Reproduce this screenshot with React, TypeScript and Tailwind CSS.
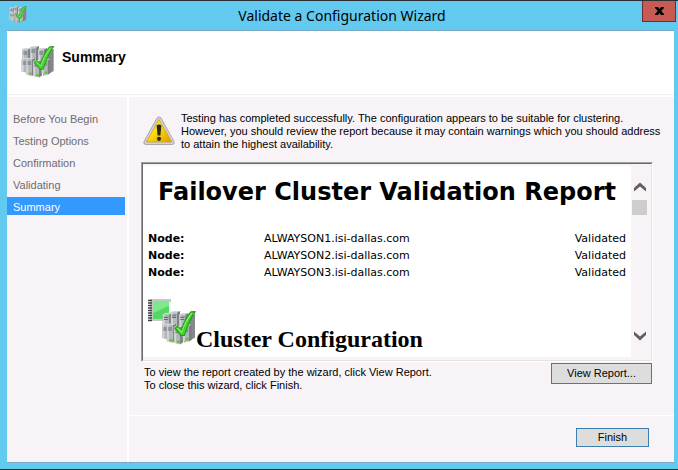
import React from "react";

const uiFont = "font-['Liberation_Sans',Arial,sans-serif]";
const reportFont = "font-['DejaVu_Sans',Verdana,sans-serif]";

const steps = ["Before You Begin", "Testing Options", "Confirmation", "Validating", "Summary"];

const nodes = [
  { name: "ALWAYSON1.isi-dallas.com", status: "Validated" },
  { name: "ALWAYSON2.isi-dallas.com", status: "Validated" },
  { name: "ALWAYSON3.isi-dallas.com", status: "Validated" },
];

function Tower({ x, y, h, light = false }: { x: number; y: number; h: number; light?: boolean }) {
  return (
    <g transform={`translate(${x} ${y})`}>
      <path d="M0 1 L3 0 L9 0 L6.5 1.5 L0 1.5Z" fill="#d4d6d9" />
      <path d={`M6 1.5 L9 0 L9 ${h - 2} L6 ${h}Z`} fill="#7d8186" />
      <path d={`M0 1.2 L6 1.5 L6 ${h} L0 ${h - 1.5}Z`} fill="#b3b6ba" />
      <path d={`M0.4 1.5 L2.2 1.5 L2.2 ${h - 1} L0.4 ${h - 1.5}Z`} fill="#d3d5d8" />
      <path d="M1.2 4h4M1.2 6h4" stroke="#6a6e73" strokeWidth="1" />
      {light && <ellipse cx="4.4" cy={h - 2.4} rx="1.7" ry="1.2" fill="#5fc926" />}
    </g>
  );
}

function Servers() {
  return (
    <g>
      <path d="M22 5 L32.5 3 L32.5 25 L22 30Z" fill="#a5a8ad" />
      <path d="M27 5 L32.5 3 L32.5 25 L27 28Z" fill="#85898e" />
      <Tower x={1} y={2} h={21} />
      <Tower x={9} y={0} h={22} />
      <Tower x={17} y={2} h={24} />
      <Tower x={0.5} y={12} h={15} />
      <Tower x={5} y={12} h={18} light />
      <Tower x={12} y={14} h={17.5} light />
      <Tower x={20.5} y={13} h={16} light />
      <path
        d="M13 16.5 L15.5 14.2 L19.3 17.8 C21.5 11 25 4.5 28.5 0.8 L32.8 0.6 C28.5 6 25 14.5 22.3 23.2 L18.5 23.2 C17 20.5 15 18.2 13 16.5Z"
        fill="#44d32c"
        stroke="#249a1b"
        strokeWidth="1"
        strokeLinejoin="round"
      />
      <path d="M15.4 15.8 L19.7 20 Q23.5 9 29.6 1.8" fill="none" stroke="#8bf06c" strokeWidth="1" />
    </g>
  );
}

function ServersIcon({ className }: { className: string }) {
  return (
    <svg viewBox="0 0 34 33" className={className} aria-hidden="true">
      <Servers />
    </svg>
  );
}

function ReportIcon() {
  return (
    <svg viewBox="0 0 48 50" className="h-[50px] w-12 shrink-0" aria-hidden="true">
      <rect x="2" y="1" width="21" height="22" fill="#c3c9c3" />
      <rect x="5" y="3" width="16" height="18" fill="#52d864" />
      <path d="M5 3h16v5L5 15Z" fill="#7fe88a" />
      <path d="M22 4v19" stroke="#f2f4f2" strokeWidth="2" />
      <path
        d="M0 2.5h4M0 5h4M0 7.5h4M0 10h4M0 12.5h4M0 15h4M0 17.5h4M0 20h4M0 22.5h4"
        stroke="#3d423e"
        strokeWidth="1.4"
      />
      <g transform="translate(13.5 13) scale(1.03 1.06)">
        <Servers />
      </g>
    </svg>
  );
}

function WarningIcon() {
  return (
    <svg viewBox="0 0 32 30" className="h-[30px] w-8 shrink-0" aria-hidden="true">
      <defs>
        <linearGradient id="warning-fill" x1="0" y1="0" x2="1" y2="1">
          <stop offset="0" stopColor="#fff27a" />
          <stop offset="0.45" stopColor="#fbdc09" />
          <stop offset="1" stopColor="#e69a00" />
        </linearGradient>
      </defs>
      <path d="M14 2 Q16 -0.5 18 2 L31 25.5 Q32 28.5 29 28.5 H3 Q0 28.5 1 25.5Z" fill="#d2d2d4" stroke="#9b9b9f" strokeWidth="0.8" />
      <path d="M16 3.5 L28.7 26 H3.3Z" fill="url(#warning-fill)" stroke="#c99a13" strokeWidth="0.7" />
      <path d="M13.6 9.5 Q16 7.5 18.4 9.5 L17.4 19.5 H14.6Z" fill="#262620" />
      <circle cx="16" cy="22.8" r="2.1" fill="#262620" />
    </svg>
  );
}

function Chevron({ down = false }: { down?: boolean }) {
  return (
    <svg viewBox="0 0 12 10" className="h-[10px] w-3" aria-hidden="true">
      <path
        d={down ? "M0 0.5 L6 5.5 L12 0.5 V4 L6 9.5 L0 4Z" : "M0 9.5 L6 4.5 L12 9.5 V6 L6 0.5 L0 6Z"}
        fill="#606060"
      />
    </svg>
  );
}

export default function App() {
  return (
    <div className={`flex min-h-screen flex-col border-y border-t-[#2b2f33] border-b-[#10303f] bg-[#63caef] text-black ${uiFont}`}>
      <header className="grid h-[29px] grid-cols-[1fr_auto_1fr] items-start pr-[2px] pl-2">
        <ServersIcon className="mt-[5px] ml-px h-[18px] w-[18px]" />
        <h1 className="font-['Noto_Sans','Segoe_UI',sans-serif] text-[14px] leading-[29px]">Validate a Configuration Wizard</h1>
        <button
          type="button"
          aria-label="Close"
          className="flex h-[21px] w-[34px] items-center justify-center justify-self-end border border-t-0 border-[#6b2f2f] bg-[#c75a53]"
        >
          <svg viewBox="0 0 9 8" className="h-2 w-[9px]" aria-hidden="true">
            <path d="M0 0H3L4.5 2L6 0H9V1L6.2 4L9 7V8H6L4.5 6L3 8H0V7L2.8 4L0 1Z" fill="#000" />
          </svg>
        </button>
      </header>

      <main className="mr-1 mb-[6px] ml-[7px] flex flex-1 flex-col border-y border-[#7aa9c8] bg-white">
        <div className="flex h-16 items-start border-b border-[#f0f0f0] pl-[14px]">
          <ServersIcon className="mt-[15px] h-[33px] w-[34px]" />
          <h2 className="mt-4 ml-[7px] text-[14px] leading-5 font-bold">Summary</h2>
        </div>

        <div className="mt-[2px] flex flex-1 gap-[2px]">
          <nav className="w-[120px] shrink-0 bg-[#f7f3f7] pt-3 pr-[2px]" aria-label="Wizard steps">
            <ol className="flex flex-col gap-1">
              {steps.map((step) => (
                <li
                  key={step}
                  aria-current={step === "Summary" ? "step" : undefined}
                  className={`pt-[2px] pl-[6px] text-[11px] leading-[16px] ${step === "Summary" ? "bg-[#3399ff] text-white" : "text-[#6d6d6d]"}`}
                >
                  {step}
                </li>
              ))}
            </ol>
          </nav>

          <div className="flex min-w-0 flex-1 flex-col bg-[#f7f3f7]">
            <section className="flex-1 pr-[21px] pl-3">
              <div className="flex h-[65px] items-start gap-[6px] pt-[15px] pl-[2px]">
                <div className="pt-1">
                  <WarningIcon />
                </div>
                <p className="text-[11px] leading-[13px] whitespace-nowrap">
                  Testing has completed successfully. The configuration appears to be suitable for clustering.
                  <br />
                  However, you should review the report because it may contain warnings which you should address
                  <br />
                  to attain the highest availability.
                </p>
              </div>

              <div className="border border-t-[#a0a0a0] border-r-white border-b-white border-l-[#a0a0a0]">
                <div className="flex border border-t-[#696969] border-r-[#e3e3e3] border-b-[#e3e3e3] border-l-[#696969] pt-[2px] pb-[3px]">
                  <article className="h-[191px] min-w-0 flex-1 bg-white pr-[5px] pl-[5px]">
                    <h2 className={`pt-[10px] text-center text-[24px] leading-8 font-bold whitespace-nowrap ${reportFont}`}>
                      Failover Cluster Validation Report
                    </h2>
                    <table className={`mt-[22px] w-full table-fixed border-collapse text-[11px] leading-[17px] ${reportFont}`}>
                      <tbody>
                        {nodes.map((node) => (
                          <tr key={node.name}>
                            <th scope="row" className="w-[116px] p-0 text-left font-bold">
                              Node:
                            </th>
                            <td className="p-0">{node.name}</td>
                            <td className="w-20 p-0 text-right">{node.status}</td>
                          </tr>
                        ))}
                      </tbody>
                    </table>
                    <div className="mt-[17px] flex items-end">
                      <ReportIcon />
                      <h3 className="font-['Liberation_Serif','Times_New_Roman',serif] text-[24px] leading-[18px] font-bold whitespace-nowrap">
                        Cluster Configuration
                      </h3>
                    </div>
                  </article>
                  <div className="flex w-5 shrink-0 flex-col items-start pt-4 pb-4">
                    <button type="button" aria-label="Scroll up" className="ml-[3px]">
                      <Chevron />
                    </button>
                    <div className="mt-2 ml-px h-[15px] w-[15px] bg-[#cdcdcd]" />
                    <button type="button" aria-label="Scroll down" className="mt-auto ml-[3px]">
                      <Chevron down />
                    </button>
                  </div>
                </div>
              </div>

              <div className="flex items-start justify-between pt-px pr-px pl-[3px]">
                <p className="pt-[3px] text-[11px] leading-[13px]">
                  To view the report created by the wizard, click View Report.
                  <br />
                  To close this wizard, click Finish.
                </p>
                <button type="button" className="h-[21px] w-[101px] border border-[#707070] bg-[#dddddd] text-[11px] leading-[19px]">
                  View Report...
                </button>
              </div>
            </section>

            <footer className="flex h-[47px] justify-end border-t border-white pt-3 pr-[25px]">
              <button type="button" className="h-[19px] w-[73px] border border-[#3c7fb1] bg-[#dddddd] text-[11px] leading-[17px]">
                Finish
              </button>
            </footer>
          </div>
        </div>
      </main>
    </div>
  );
}
